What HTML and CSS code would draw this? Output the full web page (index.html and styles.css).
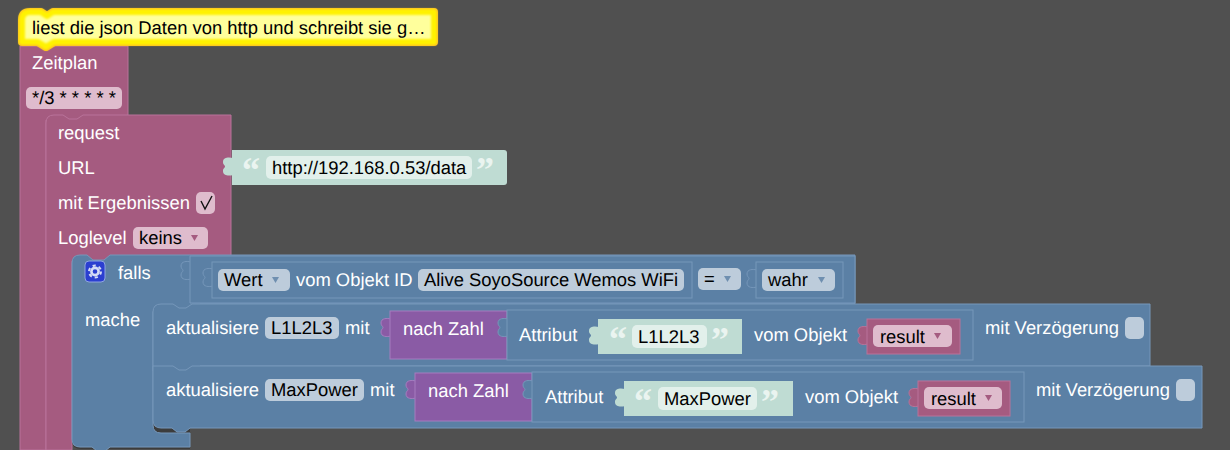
FILE: index.html
```html
<!DOCTYPE html>
<html lang="de">
<head>
    <meta charset="UTF-8">
    <meta name="viewport" content="width=device-width, initial-scale=1.0">
    <title>Blockly Skript</title>
    <link rel="stylesheet" href="styles.css">
</head>
<body>
<svg class="workspace" width="1230" height="450" viewBox="0 0 1230 450">
    <defs>
        <path id="tab" d="M1 0 C-3 -1 -9 -1 -9 4 C-9 7 -7 7 -7 8.5 C-7 10 -9 10 -9 13 C-9 18 -3 18 1 17 Z"/>
        <path id="arrow" d="M0 0 H7 L3.5 6 Z"/>
    </defs>

    <!-- Zeitplan -->
    <path class="pink" d="M20 46 H128 V120 H46 V450 H20 Z"/>
    <rect class="field-pink" x="26" y="87" width="96" height="22" rx="5"/>
    <text class="label" x="32" y="69">Zeitplan</text>
    <text class="value" x="32" y="104">*/3 * * * * *</text>

    <!-- request -->
    <path class="pink" d="M54 115 H63 L69 119 H77 L83 115 H231 V261 H72 V450 H46 V123 Q46 115 54 115 Z"/>
    <text class="label" x="58" y="139">request</text>
    <text class="label" x="58" y="174">URL</text>
    <text class="label" x="58" y="209">mit Ergebnissen</text>
    <text class="label" x="58" y="244">Loglevel</text>
    <rect class="field-pink" x="196" y="192" width="19" height="22" rx="5"/>
    <path class="check" d="M201 201 L205 209 L212 196"/>
    <rect class="field-pink" x="133" y="227" width="75" height="22" rx="5"/>
    <text class="value" x="139" y="244">keins</text>
    <use class="arrow-pink" href="#arrow" x="191" y="235"/>

    <!-- URL text -->
    <use class="green" href="#tab" x="232" y="158"/>
    <path class="green" d="M232 150 H504 Q507 150 507 153 V182 Q507 185 504 185 H232 Z"/>
    <rect class="field-green" x="266" y="156" width="206" height="23" rx="5"/>
    <text class="quote" x="242" y="182">“</text>
    <text class="quote" x="476" y="182">”</text>
    <text class="value" x="272" y="174">http://192.168.0.53/data</text>

    <!-- falls -->
    <path class="shadow" d="M72 420 V440 Q72 449 81 449 H190 V420 Z"/>
    <rect class="shadow" x="153" y="420" width="37" height="14"/>
    <path class="blue" d="M80 255 H87 L93 260 H104 L110 255 H855 V304 H200 V309 H161 Q153 309 153 312 V425 Q153 433 161 433 H190 V447 H110 L105 451 H97 L92 447 H80 Q72 447 72 439 V263 Q72 255 80 255 Z"/>
    <rect class="gear-box" x="85" y="261" width="20" height="21" rx="4"/>
    <circle class="gear-ring" cx="95" cy="271.5" r="3.6"/>
    <circle class="gear-teeth" cx="95" cy="271.5" r="6"/>
    <text class="label" x="118" y="279">falls</text>
    <text class="label" x="85" y="326">mache</text>

    <use class="blue" href="#tab" x="190" y="262"/>
    <path class="blue" d="M190 256 H855 V303 H190 Z"/>
    <use class="blue" href="#tab" x="212" y="269"/>
    <rect class="blue" x="212" y="262" width="480" height="36"/>
    <rect class="field-blue" x="218" y="269" width="72" height="22" rx="5"/>
    <text class="value" x="224" y="286">Wert</text>
    <use class="arrow-blue" href="#arrow" x="272" y="277"/>
    <text class="label" x="296" y="286">vom Objekt ID</text>
    <rect class="field-blue" x="418" y="269" width="266" height="22" rx="5"/>
    <text class="value" x="424" y="286">Alive SoyoSource Wemos WiFi</text>
    <rect class="field-blue" x="698" y="268" width="43" height="22" rx="5"/>
    <text class="value" x="704" y="285">=</text>
    <use class="arrow-blue" href="#arrow" x="724" y="276"/>
    <use class="blue" href="#tab" x="756" y="270"/>
    <rect class="blue" x="756" y="262" width="87" height="36"/>
    <rect class="field-blue" x="762" y="269" width="73" height="22" rx="5"/>
    <text class="value" x="768" y="286">wahr</text>
    <use class="arrow-blue" href="#arrow" x="818" y="277"/>

    <!-- aktualisiere L1L2L3 -->
    <path class="blue" d="M161 304 H173 L179 308 H186 L192 304 H1150 V366 H200 V371 H153 V312 Q153 304 161 304 Z"/>
    <text class="label" x="166" y="334">aktualisiere</text>
    <rect class="field-blue" x="265" y="317" width="74" height="22" rx="5"/>
    <text class="value" x="271" y="334">L1L2L3</text>
    <text class="label" x="345" y="334">mit</text>
    <use class="purple" href="#tab" x="390" y="319"/>
    <rect class="purple" x="390" y="311" width="117" height="48"/>
    <text class="label" x="403" y="335">nach Zahl</text>
    <use class="blue" href="#tab" x="507" y="319"/>
    <rect class="blue" x="507" y="310" width="466" height="50"/>
    <text class="label" x="519" y="341">Attribut</text>
    <use class="green" href="#tab" x="598" y="327"/>
    <rect class="green" x="598" y="319" width="144" height="35"/>
    <rect class="field-green" x="632" y="325" width="75" height="23" rx="5"/>
    <text class="quote" x="609" y="351">“</text>
    <text class="quote" x="711" y="352">”</text>
    <text class="value" x="638" y="343">L1L2L3</text>
    <text class="label" x="754" y="341">vom Objekt</text>
    <use class="pink" href="#tab" x="867" y="327"/>
    <rect class="pink" x="867" y="319" width="93" height="35"/>
    <rect class="field-pink" x="873" y="325" width="79" height="22" rx="5"/>
    <text class="value" x="880" y="343">result</text>
    <use class="arrow-pink" href="#arrow" x="934" y="333"/>
    <text class="label" x="985" y="334">mit Verzögerung</text>
    <rect class="field-blue" x="1125" y="317" width="19" height="22" rx="5"/>

    <!-- aktualisiere MaxPower -->
    <path class="blue" d="M153 366 H173 L179 370 H186 L192 366 H1202 V428 H190 L185 432 H177 L172 428 H161 Q153 428 153 420 Z"/>
    <text class="label" x="166" y="396">aktualisiere</text>
    <rect class="field-blue" x="265" y="379" width="99" height="22" rx="5"/>
    <text class="value" x="271" y="396">MaxPower</text>
    <text class="label" x="370" y="396">mit</text>
    <use class="purple" href="#tab" x="415" y="381"/>
    <rect class="purple" x="415" y="373" width="117" height="48"/>
    <text class="label" x="428" y="397">nach Zahl</text>
    <use class="blue" href="#tab" x="532" y="381"/>
    <rect class="blue" x="532" y="372" width="492" height="50"/>
    <text class="label" x="545" y="403">Attribut</text>
    <use class="green" href="#tab" x="624" y="389"/>
    <rect class="green" x="624" y="381" width="169" height="35"/>
    <rect class="field-green" x="658" y="387" width="99" height="23" rx="5"/>
    <text class="quote" x="634" y="413">“</text>
    <text class="quote" x="761" y="414">”</text>
    <text class="value" x="664" y="405">MaxPower</text>
    <text class="label" x="805" y="403">vom Objekt</text>
    <use class="pink" href="#tab" x="918" y="389"/>
    <rect class="pink" x="918" y="381" width="92" height="35"/>
    <rect class="field-pink" x="924" y="387" width="78" height="22" rx="5"/>
    <text class="value" x="931" y="405">result</text>
    <use class="arrow-pink" href="#arrow" x="985" y="395"/>
    <text class="label" x="1036" y="396">mit Verzögerung</text>
    <rect class="field-blue" x="1176" y="379" width="19" height="22" rx="5"/>

    <!-- Kommentar, selected -->
    <path class="comment-outer" d="M30 12 H41 L47 16 L53 12 H434 V42 H54 L46 47 L38 42 H22 V20 Q22 12 30 12 Z"/>
    <path class="comment-inner" d="M30 12 H41 L47 16 L53 12 H434 V42 H54 L46 47 L38 42 H22 V20 Q22 12 30 12 Z"/>
    <text class="value" x="32" y="34">liest die json Daten von http und schreibt sie g…</text>
</svg>
</body>
</html>
```
FILE: styles.css
```css
body {
    margin: 0;
    background: #505050;
    overflow: hidden;
}
.workspace {
    display: block;
    font-family: "Liberation Sans", Arial, sans-serif;
    font-size: 18.4px;
    text-rendering: geometricPrecision;
}
.label {
    fill: #fff;
}
.value {
    fill: #000;
}
.quote {
    fill: #eaf4f0;
    font-family: "Liberation Serif", serif;
    font-weight: bold;
    font-size: 36px;
}
.pink {
    fill: #a55b80;
    stroke: #b9739a;
    stroke-width: 1;
}
.blue {
    fill: #5b80a5;
    stroke: #7697ba;
    stroke-width: 1;
}
.purple {
    fill: #8a5ba5;
    stroke: #a67dc0;
    stroke-width: 1;
}
.green {
    fill: #bfdcd3;
}
.shadow {
    fill: #3c3c3c;
}
.field-pink {
    fill: #dfbccd;
}
.field-blue {
    fill: #bdccdb;
}
.field-green {
    fill: #e2f0eb;
}
.arrow-pink {
    fill: #a55b80;
}
.arrow-blue {
    fill: #6f8fb0;
}
.check {
    fill: none;
    stroke: #111;
    stroke-width: 1.4;
}
.gear-box {
    fill: #2b3fd0;
    stroke: #8fa5e0;
    stroke-width: 1;
}
.gear-ring {
    fill: none;
    stroke: #d5dcf5;
    stroke-width: 2.6;
}
.gear-teeth {
    fill: none;
    stroke: #d5dcf5;
    stroke-width: 2;
    stroke-dasharray: 3.2 3.08;
}
.comment-outer {
    fill: none;
    stroke: #fdb92a;
    stroke-width: 8;
    stroke-linejoin: round;
}
.comment-inner {
    fill: #ffff9c;
    stroke: #fff200;
    stroke-width: 6;
    stroke-linejoin: round;
    filter: blur(0.8px);
}
```
